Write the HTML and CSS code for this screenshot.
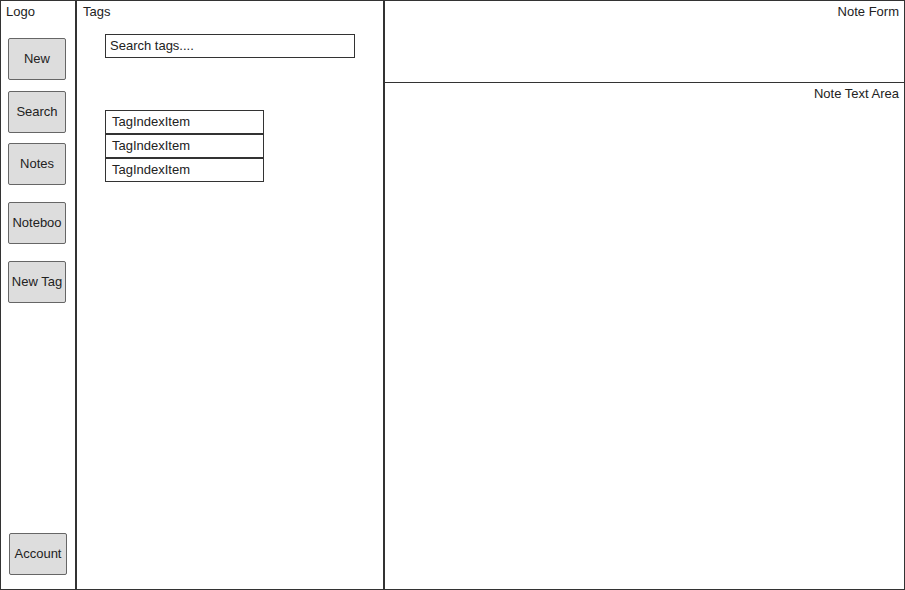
FILE: index.html
```html
<!DOCTYPE html>
<html>
<head>
<meta charset="utf-8">
<link rel="stylesheet" href="styles.css">
</head>
<body>
<div class="app">
  <aside class="sidebar">
    <div class="logo">Logo</div>
    <nav class="nav">
      <div class="nav-group">
        <button class="btn">New</button>
        <button class="btn btn-search">Search</button>
        <button class="btn">Notes</button>
      </div>
      <div class="nav-group nav-group-wide">
        <button class="btn">Noteboo</button>
        <button class="btn">New Tag</button>
      </div>
    </nav>
    <button class="btn btn-account">Account</button>
  </aside>
  <section class="tags">
    <div class="label">Tags</div>
    <div class="search">Search tags....</div>
    <ul class="tag-list">
      <li class="tag-item">TagIndexItem</li>
      <li class="tag-item">TagIndexItem</li>
      <li class="tag-item">TagIndexItem</li>
    </ul>
  </section>
  <main class="main">
    <div class="note-form"><span class="label">Note Form</span></div>
    <div class="note-text"><span class="label">Note Text Area</span></div>
  </main>
</div>
</body>
</html>
```

FILE: styles.css
```css
* { box-sizing: border-box; }
html, body { margin: 0; padding: 0; background: #fff; }
body {
  font-family: "Liberation Sans", Arial, sans-serif;
  font-size: 13px;
  color: #222;
}
.app {
  width: 905px;
  height: 590px;
  border: 1px solid #333;
  display: flex;
}
.sidebar {
  width: 76px;
  border-right: 2px solid #333;
  display: flex;
  flex-direction: column;
  padding: 3px 0 14px 7px;
}
.logo { line-height: 16px; margin-left: -2px; }
.nav { display: flex; flex-direction: column; gap: 17px; margin-top: 18px; }
.nav-group { display: flex; flex-direction: column; gap: 10px; }
.nav-group-wide { gap: 17px; }
.btn {
  width: 58px;
  height: 42px;
  border: 1px solid #666;
  border-radius: 2px;
  background: #ddd;
  font-family: "Liberation Sans", Arial, sans-serif;
  font-size: 13px;
  color: #222;
  padding: 0 0 2px;
  white-space: nowrap;
  overflow: hidden;
}
.btn-search { margin-top: 1px; }
.btn-account { margin-top: auto; margin-left: 1px; }
.tags {
  width: 308px;
  border-right: 2px solid #333;
  padding: 3px 0 0 6px;
}
.label { line-height: 16px; display: block; }
.search {
  margin: 14px 0 0 22px;
  width: 250px;
  height: 24px;
  border: 1px solid #333;
  line-height: 21px;
  padding-left: 4px;
}
.tag-list {
  list-style: none;
  margin: 52px 0 0 22px;
  padding: 0;
}
.tag-item {
  width: 159px;
  height: 24px;
  border: 1px solid #333;
  line-height: 21px;
  padding-left: 6px;
}
.main {
  flex: 1;
  display: flex;
  flex-direction: column;
}
.note-form {
  height: 82px;
  border-bottom: 1px solid #333;
  text-align: right;
  padding: 3px 5px 0 0;
}
.note-text {
  flex: 1;
  text-align: right;
  padding: 3px 5px 0 0;
}
```
